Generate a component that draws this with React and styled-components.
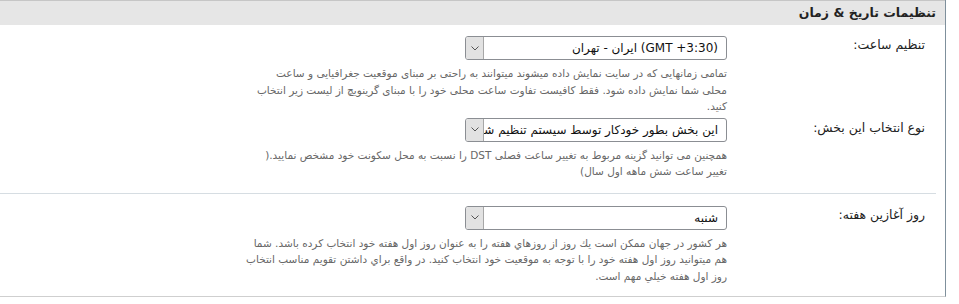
import React from 'react'
import styled, { createGlobalStyle } from 'styled-components'

const GlobalStyle = createGlobalStyle`
  html, body {
    margin: 0;
    padding: 0;
    background: #fff;
  }
  body {
    font-family: "DejaVu Sans", Tahoma, sans-serif;
  }
`;

const Panel = styled.div`
  direction: rtl;
  width: 945px;
  border-right: 1px solid #7f909c;
  border-bottom: 1px solid #cfcfcf;
  background: #fff;
`;

const Header = styled.h3`
  margin: 0;
  height: 25px;
  box-sizing: border-box;
  border-top: 1px solid #c6c6c6;
  background: #e6e6e6;
  padding: 0 9px 0 0;
  font-size: 12.5px;
  font-weight: bold;
  line-height: 24px;
  color: #222;
`;

const Group = styled.div`
  display: flex;
  flex-direction: column;
  gap: ${p => p.gap || 0}px;
  padding: ${p => p.pad || '11px 0 13px'};
  margin-right: ${p => (p.$line ? 9 : 0)}px;
  border-bottom: ${p => (p.$line ? '1px solid #d6dde2' : 'none')};
`;

const Row = styled.div`
  display: grid;
  grid-template-columns: ${p => (p.$inset ? 209 : 218)}px 1fr;
  align-items: start;
`;

const Label = styled.label`
  padding-right: ${p => (p.$inset ? 11 : 20)}px;
  font-size: 12.5px;
  line-height: 18px;
  color: #222;
  padding-top: ${p => p.top || 0}px;
`;

const Field = styled.div`
  display: flex;
  flex-direction: column;
  align-items: flex-start;
`;

const Select = styled.div`
  width: 262px;
  height: 24px;
  box-sizing: border-box;
  border: 1px solid #8b8e93;
  border-radius: 3px;
  display: flex;
  align-items: center;
  overflow: hidden;
  background: #fff;
`;

const SelectText = styled.span`
  flex: 1;
  min-width: 0;
  padding: 0 8px 0 3px;
  font-size: 12px;
  color: #111;
  white-space: nowrap;
  overflow: hidden;
`;

const Arrow = styled.span`
  width: 17px;
  height: 100%;
  flex: none;
  background: #e2e2e2;
  border-right: 1px solid #a7a7a7;
  display: flex;
  align-items: center;
  justify-content: center;
`;

const Desc = styled.p`
  margin: 5px 0 0;
  font-size: 10.5px;
  line-height: 16.5px;
  color: #676767;
  white-space: nowrap;
`;

function Dropdown({ value }) {
  return (
    <Select>
      <SelectText>{value}</SelectText>
      <Arrow>
        <svg width="8" height="5" viewBox="0 0 8 5">
          <path d="M0.5 0.5 L4 4 L7.5 0.5" fill="none" stroke="#555" strokeWidth="1" />
        </svg>
      </Arrow>
    </Select>
  )
}

function Setting({ label, value, lines, top, inset }) {
  return (
    <Row $inset={inset}>
      <Label top={top} $inset={inset}>{label}</Label>
      <Field>
        <Dropdown value={value} />
        <Desc>
          {lines.map((l, i) => (
            <React.Fragment key={i}>
              {l}
              {i < lines.length - 1 && <br />}
            </React.Fragment>
          ))}
        </Desc>
      </Field>
    </Row>
  )
}

export default function App() {
  return (
    <>
      <GlobalStyle />
      <Panel>
        <Header>تنظیمات تاریخ &amp; زمان</Header>
        <Group $line gap={3} pad="11px 0 13px">
          <Setting
            inset
            label="تنظیم ساعت:"
            value="(GMT +3:30) ایران - تهران"
            lines={[
              'تمامی زمانهایی که در سایت نمایش داده میشوند میتوانند به راحتی بر مبنای موقعیت جغرافیایی و ساعت',
              'محلی شما نمایش داده شود. فقط کافیست تفاوت ساعت محلی خود را با مبنای گرینویچ از لیست زیر انتخاب',
              'کنید.',
            ]}
          />
          <Setting
            inset
            label="نوع انتخاب این بخش:"
            top={1}
            value="این بخش بطور خودکار توسط سیستم تنظیم شود"
            lines={[
              'همچنین می توانید گزینه مربوط به تغییر ساعت فصلی DST را نسبت به محل سکونت خود مشخص نمایید.(',
              'تغییر ساعت شش ماهه اول سال)',
            ]}
          />
        </Group>
        <Group pad="12px 0 12px">
          <Setting
            label="روز آغازین هفته:"
            value="شنبه"
            lines={[
              'هر کشور در جهان ممکن است يك روز از روزهاي هفته را به عنوان روز اول هفته خود انتخاب کرده باشد. شما',
              'هم میتوانید روز اول هفته خود را با توجه به موقعیت خود انتخاب کنید. در واقع براي داشتن تقویم مناسب انتخاب',
              'روز اول هفته خیلي مهم است.',
            ]}
          />
        </Group>
      </Panel>
    </>
  )
}
